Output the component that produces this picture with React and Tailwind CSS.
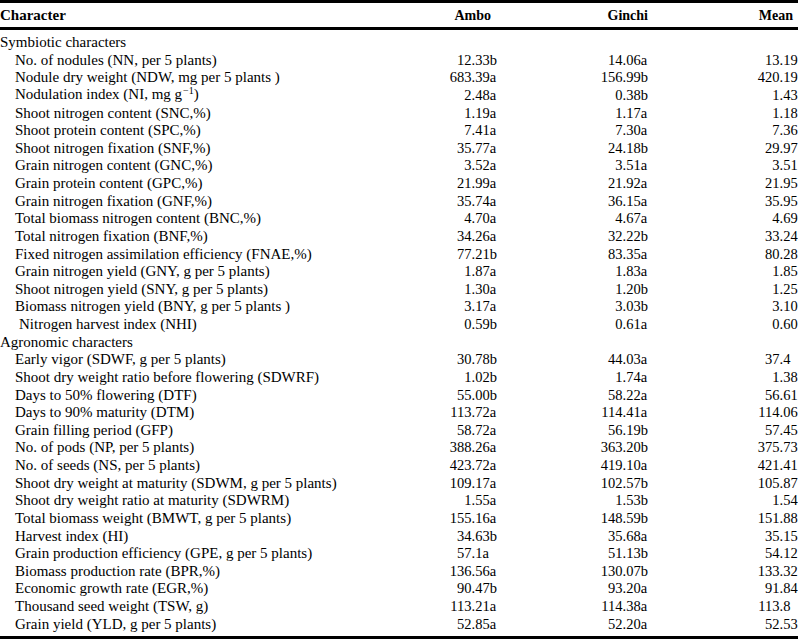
import React from "react";

const symbiotic = [
  ["No. of nodules (NN, per 5 plants)", "12.33b", "14.06a", "13.19"],
  ["Nodule dry weight (NDW, mg per 5 plants )", "683.39a", "156.99b", "420.19"],
  ["NI", "2.48a", "0.38b", "1.43"],
  ["Shoot nitrogen content (SNC,%)", "1.19a", "1.17a", "1.18"],
  ["Shoot protein content (SPC,%)", "7.41a", "7.30a", "7.36"],
  ["Shoot nitrogen fixation (SNF,%)", "35.77a", "24.18b", "29.97"],
  ["Grain nitrogen content (GNC,%)", "3.52a", "3.51a", "3.51"],
  ["Grain protein content (GPC,%)", "21.99a", "21.92a", "21.95"],
  ["Grain nitrogen fixation (GNF,%)", "35.74a", "36.15a", "35.95"],
  ["Total biomass nitrogen content (BNC,%)", "4.70a", "4.67a", "4.69"],
  ["Total nitrogen fixation (BNF,%)", "34.26a", "32.22b", "33.24"],
  ["Fixed nitrogen assimilation efficiency (FNAE,%)", "77.21b", "83.35a", "80.28"],
  ["Grain nitrogen yield (GNY, g per 5 plants)", "1.87a", "1.83a", "1.85"],
  ["Shoot nitrogen yield (SNY, g per 5 plants)", "1.30a", "1.20b", "1.25"],
  ["Biomass nitrogen yield (BNY, g per 5 plants )", "3.17a", "3.03b", "3.10"],
  ["NHI", "0.59b", "0.61a", "0.60"],
];

const agronomic = [
  ["Early vigor (SDWF, g per 5 plants)", "30.78b", "44.03a", "37.4"],
  ["Shoot dry weight ratio before flowering (SDWRF)", "1.02b", "1.74a", "1.38"],
  ["Days to 50% flowering (DTF)", "55.00b", "58.22a", "56.61"],
  ["Days to 90% maturity (DTM)", "113.72a", "114.41a", "114.06"],
  ["Grain filling period (GFP)", "58.72a", "56.19b", "57.45"],
  ["No. of pods (NP, per 5 plants)", "388.26a", "363.20b", "375.73"],
  ["No. of seeds (NS, per 5 plants)", "423.72a", "419.10a", "421.41"],
  ["Shoot dry weight at maturity (SDWM, g per 5 plants)", "109.17a", "102.57b", "105.87"],
  ["Shoot dry weight ratio at maturity (SDWRM)", "1.55a", "1.53b", "1.54"],
  ["Total biomass weight (BMWT, g per 5 plants)", "155.16a", "148.59b", "151.88"],
  ["Harvest index (HI)", "34.63b", "35.68a", "35.15"],
  ["Grain production efficiency (GPE, g per 5 plants)", "57.1a", "51.13b", "54.12"],
  ["Biomass production rate (BPR,%)", "136.56a", "130.07b", "133.32"],
  ["Economic growth rate (EGR,%)", "90.47b", "93.20a", "91.84"],
  ["Thousand seed weight (TSW, g)", "113.21a", "114.38a", "113.8"],
  ["Grain yield (YLD, g per 5 plants)", "52.85a", "52.20a", "52.53"],
];

function Label({ text }) {
  if (text === "NI") {
    return (
      <span className="pl-[15px]">
        Nodulation index (NI, mg g
        <span className="text-[10px] relative top-[-5px] ml-[1px]">−1</span>)
      </span>
    );
  }
  if (text === "NHI") {
    return <span className="pl-[19px]">Nitrogen harvest index (NHI)</span>;
  }
  return <span className="pl-[15px]">{text}</span>;
}

function Num({ value, intW, fracW }) {
  const i = value.indexOf(".");
  const ip = value.slice(0, i);
  const fp = value.slice(i);
  return (
    <div className="flex whitespace-nowrap text-[14.5px]">
      <span className={`${intW} text-right`}>{ip}</span>
      <span className={`${fracW} text-left`}>{fp}</span>
    </div>
  );
}

function Row({ r }) {
  return (
    <div className="flex h-[17.64px] items-center">
      <div className="w-[420px] whitespace-nowrap">
        <Label text={r[0]} />
      </div>
      <Num value={r[1]} intW="w-[51.5px]" fracW="w-[48.5px]" />
      <Num value={r[2]} intW="w-[102.5px]" fracW="w-[57.5px]" />
      <Num value={r[3]} intW="w-[99.5px]" fracW="w-[18.5px]" />
    </div>
  );
}

export default function App() {
  return (
    <div
      className="w-[798px] h-[640px] bg-white text-black overflow-hidden"
      style={{ fontFamily: '"Liberation Serif", "Times New Roman", serif' }}
    >
      <div className="border-t-[3px] border-b-[3px] border-black h-[30px] flex items-center text-[14px] font-bold">
        <div className="w-[420px] text-[15px]">Character</div>
        <div className="w-[100px] text-right pr-[29px]">Ambo</div>
        <div className="w-[160px] text-right pr-[32px]">Ginchi</div>
        <div className="w-[118px] text-right pr-[5px]">Mean</div>
      </div>
      <div className="pt-[4px] pb-[3px] border-b-[3px] border-black text-[15px] leading-[17.64px]">
        <div className="flex h-[17.64px] items-center">Symbiotic characters</div>
        {symbiotic.map((r) => (
          <Row key={r[0]} r={r} />
        ))}
        <div className="flex h-[17.64px] items-center">Agronomic characters</div>
        {agronomic.map((r) => (
          <Row key={r[0]} r={r} />
        ))}
      </div>
    </div>
  );
}
